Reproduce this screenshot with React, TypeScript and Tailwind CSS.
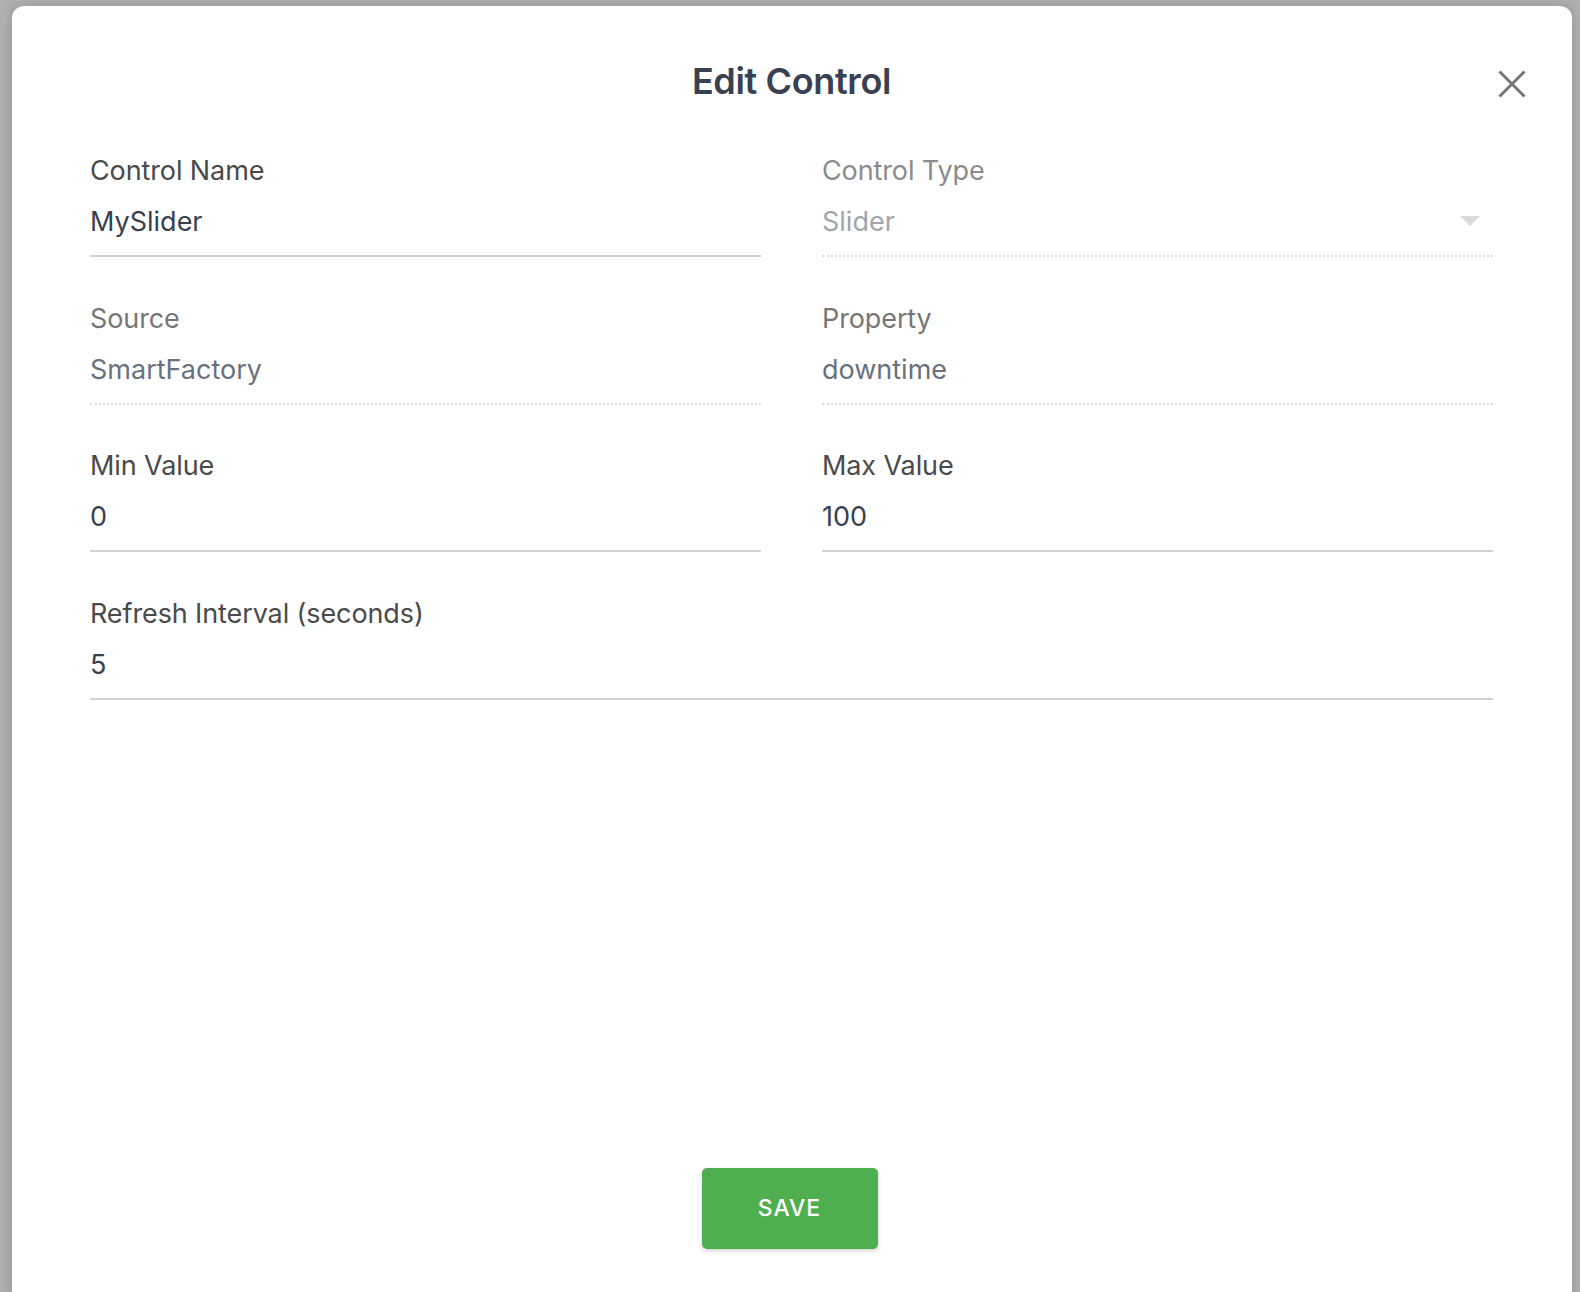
import React from "react";

type FieldProps = {
  label: string;
  value: string;
  variant?: "normal" | "readonly" | "disabled";
  select?: boolean;
  wide?: boolean;
};

const labelColor = {
  normal: "text-[#4a4a4a]",
  readonly: "text-[#767676]",
  disabled: "text-[#8c8c8c]",
};

const valueColor = {
  normal: "text-[#384152]",
  readonly: "text-[#687180]",
  disabled: "text-[#a0a5ad]",
};

function Field({ label, value, variant = "normal", select, wide }: FieldProps) {
  const line =
    variant === "normal"
      ? "border-b-2 border-solid border-[#d2d2d2]"
      : "border-b-2 border-dotted border-[#dcdcdc]";
  return (
    <div className={`flex flex-col pb-[16px] ${line} ${wide ? "col-span-2" : ""}`}>
      <div className={`pt-[1px] text-[27px] leading-[34px] tracking-[-0.004em] ${labelColor[variant]}`}>
        {label}
      </div>
      <div className="mt-[17px] flex items-center justify-between h-[34px]">
        <span className={`text-[27px] leading-[34px] ${valueColor[variant]}`}>{value}</span>
        {select && (
          <svg width="20" height="10" viewBox="0 0 20 10" className="mr-[13px] -mt-[3px]">
            <path d="M0 0 L20 0 L10 10 Z" fill="#d9d9d9" />
          </svg>
        )}
      </div>
    </div>
  );
}

export default function App() {
  return (
    <div
      className="w-[1580px] h-[1292px] overflow-hidden bg-[#b1b1b1] pt-[6px] pl-[12px]"
      style={{ fontFamily: "Inter, 'Noto Sans', sans-serif" }}
    >
      <div className="relative w-[1560px] h-[1320px] bg-white rounded-t-[12px] shadow-[0_0_14px_rgba(0,0,0,0.18)] pt-[53px] pl-[78px] pr-[79px] flex flex-col">
        {/* Close */}
        <button className="absolute top-[64px] right-[46px] w-[28px] h-[28px]">
          <svg width="28" height="28" viewBox="0 0 28 28">
            <path d="M1.5 1.5 L26.5 26.5 M26.5 1.5 L1.5 26.5" stroke="#767676" strokeWidth="3" />
          </svg>
        </button>

        <h2 className="text-center text-[36px] leading-[44px] font-semibold text-[#384152] tracking-[-0.01em]">
          Edit Control
        </h2>

        <div className="mt-[50px] grid grid-cols-2 gap-x-[61px] gap-y-[43.5px]">
          <Field label="Control Name" value="MySlider" />
          <Field label="Control Type" value="Slider" variant="disabled" select />
          <Field label="Source" value="SmartFactory" variant="readonly" />
          <Field label="Property" value="downtime" variant="readonly" />
          <Field label="Min Value" value="0" />
          <Field label="Max Value" value="100" />
          <Field label="Refresh Interval (seconds)" value="5" wide />
        </div>

        <div className="flex justify-center mt-[468px] pr-[4px]">
          <button className="w-[176px] h-[81px] rounded-[5px] bg-[#4fae50] text-white text-[23px] font-medium tracking-[0.04em] shadow-[0_2px_4px_rgba(0,0,0,0.18)]">
            SAVE
          </button>
        </div>
      </div>
    </div>
  );
}
